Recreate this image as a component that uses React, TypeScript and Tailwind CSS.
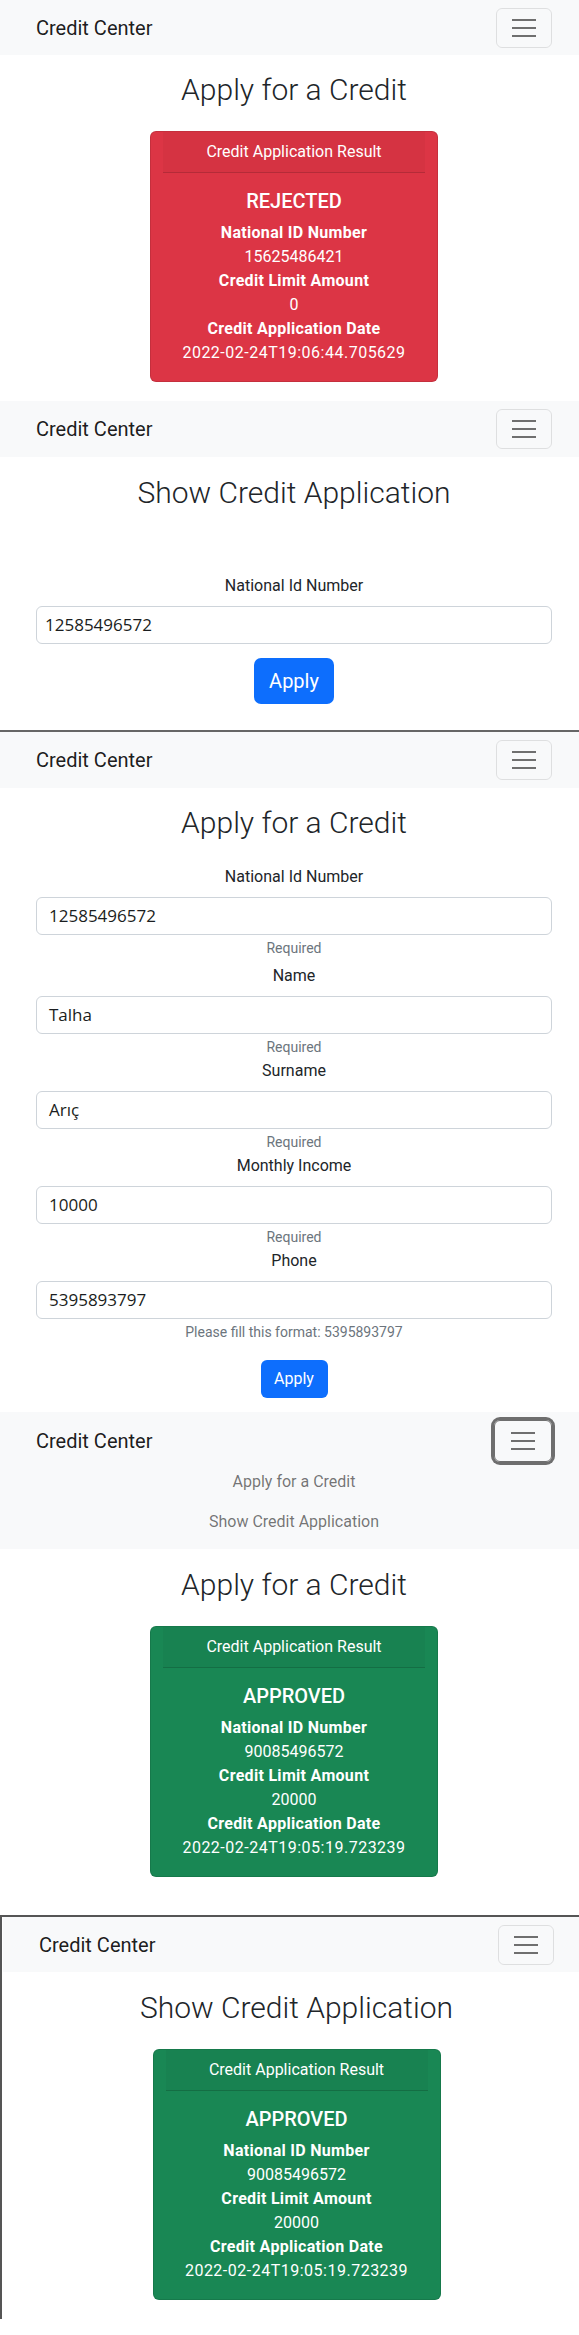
import clsx from "clsx";

type Result = {
  status: string;
  tone: "danger" | "success";
  nationalId: string;
  limit: string;
  date: string;
};

const rejected: Result = {
  status: "REJECTED",
  tone: "danger",
  nationalId: "15625486421",
  limit: "0",
  date: "2022-02-24T19:06:44.705629",
};

const approved: Result = {
  status: "APPROVED",
  tone: "success",
  nationalId: "90085496572",
  limit: "20000",
  date: "2022-02-24T19:05:19.723239",
};

function Toggler({ focused }: { focused?: boolean }) {
  return (
    <button
      type="button"
      className={clsx(
        "flex flex-col items-center justify-center gap-[6px] rounded-[6px] border",
        focused
          ? "h-[42px] w-[58px] border-[#6e6e6e] ring-[3px] ring-[#6e6e6e]"
          : "h-[40px] w-[56px] border-black/10"
      )}
    >
      <span className="h-[2px] w-[24px] bg-[#6f6f6f]" />
      <span className="h-[2px] w-[24px] bg-[#6f6f6f]" />
      <span className="h-[2px] w-[24px] bg-[#6f6f6f]" />
    </button>
  );
}

// pad = horizontal padding of the whole strip, height only for the collapsed bar
function Navbar({ height, pad, expanded }: { height?: string; pad: string; expanded?: boolean }) {
  return (
    <nav className={clsx("bg-[#f8f9fa]", pad)}>
      <div
        className={clsx(
          "flex items-center justify-between",
          expanded ? "pt-[8px]" : height
        )}
      >
        <span className="text-[20px] leading-[30px] text-black/90">Credit Center</span>
        <Toggler focused={expanded} />
      </div>
      {expanded && (
        <ul className="pb-[7px] text-center text-[16px] text-black/55">
          <li className="py-[8px] leading-[24px]">Apply for a Credit</li>
          <li className="py-[8px] leading-[24px]">Show Credit Application</li>
        </ul>
      )}
    </nav>
  );
}

function Title({ children, gap = "mt-[18px]" }: { children: React.ReactNode; gap?: string }) {
  return (
    <h1 className={clsx("text-center text-[30px] font-light leading-[36px] text-[#212529]", gap)}>
      {children}
    </h1>
  );
}

function ResultCard({ result }: { result: Result }) {
  return (
    <div
      className={clsx(
        "mx-auto mt-[23px] w-[288px] rounded-[6px] border border-black/10 text-center text-white",
        result.tone === "danger" ? "bg-[#dc3545]" : "bg-[#198754]"
      )}
    >
      <div className="mx-[12px] border-b border-black/15 bg-black/[0.03] py-[8px] leading-[24px]">
        Credit Application Result
      </div>
      <div className="p-4">
        <h5 className="mb-2 text-[20px] font-medium leading-[24px]">{result.status}</h5>
        <div className="leading-[24px]">
          <p className="font-bold tracking-[0.3px]">National ID Number</p>
          <p>{result.nationalId}</p>
          <p className="font-bold tracking-[0.3px]">Credit Limit Amount</p>
          <p>{result.limit}</p>
          <p className="font-bold tracking-[0.3px]">Credit Application Date</p>
          <p className="tracking-[0.5px]">{result.date}</p>
        </div>
      </div>
    </div>
  );
}

const fields = [
  { label: "National Id Number", value: "12585496572", hint: "Required", gap: "mt-[24px]" },
  { label: "Name", value: "Talha", hint: "Required", gap: "mt-[5px]" },
  { label: "Surname", value: "Arıç", hint: "Required", gap: "mt-[1px]" },
  { label: "Monthly Income", value: "10000", hint: "Required", gap: "mt-[1px]" },
  { label: "Phone", value: "5395893797", hint: "Please fill this format: 5395893797", gap: "mt-[1px]" },
];

function TextInput({ value, pad }: { value: string; pad: string }) {
  return (
    <div
      className={clsx(
        "flex h-[38px] items-center rounded-[6px] border border-[#ced4da] bg-white font-['Open_Sans',sans-serif] text-[17px] text-[#1a1d20]",
        pad
      )}
    >
      {value}
    </div>
  );
}

export default function App() {
  return (
    <div className="min-h-[2335px] bg-white font-['Roboto',sans-serif] text-[16px] text-[#212529]">
      {/* 1: rejected result */}
      <section className="pb-[19px]">
        <Navbar height="h-[55px]" pad="pl-[36px] pr-[27px]" />
        <div className="pl-[36px] pr-[27px]">
          <Title gap="mt-[17px]">Apply for a Credit</Title>
          <ResultCard result={rejected} />
        </div>
      </section>

      {/* 2: show application form */}
      <section className="pb-[26px]">
        <Navbar height="h-[56px]" pad="pl-[36px] pr-[27px]" />
        <div className="pl-[36px] pr-[27px] text-center">
          <Title>Show Credit Application</Title>
          <p className="mt-[63px] leading-[24px]">National Id Number</p>
          <div className="mt-[8px] text-left">
            <TextInput value="12585496572" pad="px-[8px]" />
          </div>
          <button
            type="button"
            className="mx-auto mt-[14px] block h-[46px] w-[80px] rounded-[7px] bg-[#0d6efd] text-[20px] text-white"
          >
            Apply
          </button>
        </div>
      </section>

      <div className="h-[2px] bg-[#666]" />

      {/* 3: apply form */}
      <section className="pb-[14px]">
        <Navbar height="h-[56px]" pad="pl-[36px] pr-[27px]" />
        <div className="pl-[36px] pr-[27px] text-center">
          <Title gap="mt-[17px]">Apply for a Credit</Title>
          {fields.map((f) => (
            <div key={f.label}>
              <p className={clsx("leading-[24px]", f.gap)}>{f.label}</p>
              <div className="mt-[8px] text-left">
                <TextInput value={f.value} pad="px-[12px]" />
              </div>
              <p className="mt-[3px] text-[14px] leading-[21px] text-[#6c757d]">{f.hint}</p>
            </div>
          ))}
          <button
            type="button"
            className="mx-auto mt-[17px] block h-[38px] w-[67px] rounded-[6px] bg-[#0d6efd] text-[16px] text-white"
          >
            Apply
          </button>
        </div>
      </section>

      {/* 4: expanded menu + approved */}
      <section className="pb-[38px]">
        <Navbar expanded pad="pl-[36px] pr-[27px]" />
        <div className="pl-[36px] pr-[27px]">
          <Title>Apply for a Credit</Title>
          <ResultCard result={approved} />
        </div>
      </section>

      {/* 5: show application result */}
      <section className="border-l-2 border-t-2 border-[#555] pb-[19px]">
        <div className="ml-[1px]">
          <Navbar height="h-[55px]" pad="pl-[36px] pr-[25px]" />
          <div className="pl-[36px] pr-[25px]">
            <Title>Show Credit Application</Title>
            <ResultCard result={approved} />
          </div>
        </div>
      </section>
    </div>
  );
}
